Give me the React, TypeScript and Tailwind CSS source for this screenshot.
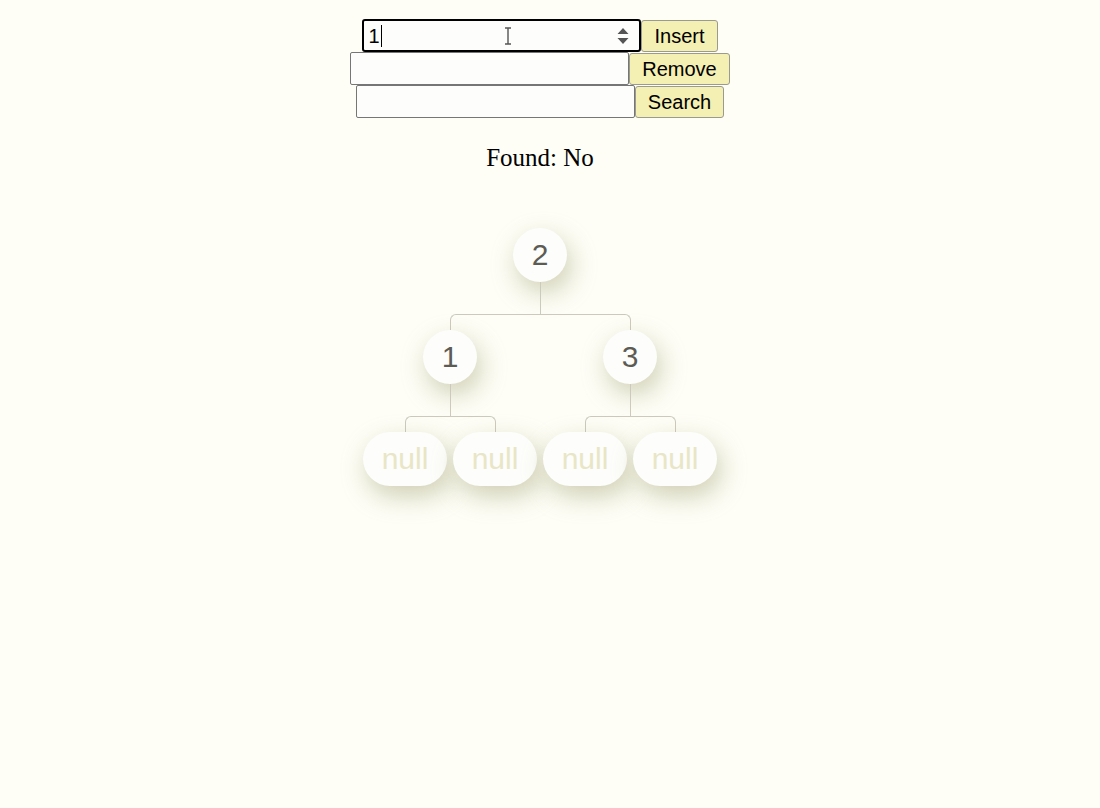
import React from 'react';

type TreeNode = { value: number | null; left?: TreeNode; right?: TreeNode };

const tree: TreeNode = {
  value: 2,
  left: { value: 1, left: { value: null }, right: { value: null } },
  right: { value: 3, left: { value: null }, right: { value: null } },
};

function Bubble({ value }: { value: number | null }) {
  if (value === null) {
    return (
      <div className="rounded-full bg-[#fdfdfb] px-[19px] py-[9px] text-[30px] leading-[36px] text-[#e8e6c6] shadow-[4px_10px_26px_rgba(150,150,100,0.45)]">
        null
      </div>
    );
  }
  return (
    <div className="rounded-full bg-[#fdfdfb] px-[19px] py-[9px] text-[30px] leading-[36px] text-[#5c5c55] shadow-[4px_10px_26px_rgba(150,150,100,0.45)]">
      {value}
    </div>
  );
}

function Subtree({ node, side }: { node: TreeNode; side?: 'left' | 'right' }) {
  const hasKids = node.left && node.right;
  return (
    <div className={`flex flex-col items-center ${hasKids ? '' : 'w-[90px]'}`}>
      {side === 'left' && (
        <div className="flex h-[16px] w-full">
          <div className="w-1/2" />
          <div className="w-1/2 rounded-tl-[6px] border-l border-t border-[#cbcabd]" />
        </div>
      )}
      {side === 'right' && (
        <div className="flex h-[16px] w-full">
          <div className="w-[calc(50%+1px)] rounded-tr-[6px] border-r border-t border-[#cbcabd]" />
        </div>
      )}
      <Bubble value={node.value} />
      {hasKids && (
        <>
          <div className="flex w-full">
            <div className="ml-[50%] h-[32px] border-l border-[#cbcabd]" />
          </div>
          <div className="flex">
            <Subtree node={node.left!} side="left" />
            <Subtree node={node.right!} side="right" />
          </div>
        </>
      )}
    </div>
  );
}

function ActionRow({ label, focused }: { label: string; focused?: boolean }) {
  return (
    <div className="flex h-[33px] items-center justify-center">
      {focused ? (
        <div className="relative flex h-[33px] w-[279px] items-center rounded-[3px] border-2 border-black bg-[#fdfdfb] pl-[4px] text-[20px]">
          <span>1</span>
          <span className="ml-px h-[22px] w-px bg-black" />
          <svg className="absolute left-[140px] top-[6px]" width="8" height="18" viewBox="0 0 8 18">
            <path d="M1 1h6M4 1v16M1 17h6" stroke="#555" strokeWidth="1.4" fill="none" />
          </svg>
          <svg className="absolute right-[9px] top-[5px]" width="14" height="20" viewBox="0 0 14 20">
            <path d="M7 2L12.5 8H1.5Z M7 18L12.5 12H1.5Z" fill="#555" />
          </svg>
        </div>
      ) : (
        <input
          className="h-[33px] w-[279px] rounded-[2px] border border-[#767676] bg-[#fdfdfb] px-1 text-[20px]"
          readOnly
          value=""
        />
      )}
      <button className="h-[32px] rounded-[3px] border border-[#9a9a90] bg-[#f4efb2] px-3 text-[20px] leading-none text-black">
        {label}
      </button>
    </div>
  );
}

export default function App() {
  return (
    <div className="min-h-screen bg-[#fefef7] font-['Liberation_Sans',Arial,sans-serif]">
      <div className="flex w-[1080px] flex-col items-center pt-[19px]">
        <ActionRow label="Insert" focused />
        <ActionRow label="Remove" />
        <ActionRow label="Search" />
        <p className="mt-[21px] font-['Liberation_Serif','Times_New_Roman',serif] text-[25px] text-black">
          Found: No
        </p>
        <div className="mt-[51px]">
          <Subtree node={tree} />
        </div>
      </div>
    </div>
  );
}
